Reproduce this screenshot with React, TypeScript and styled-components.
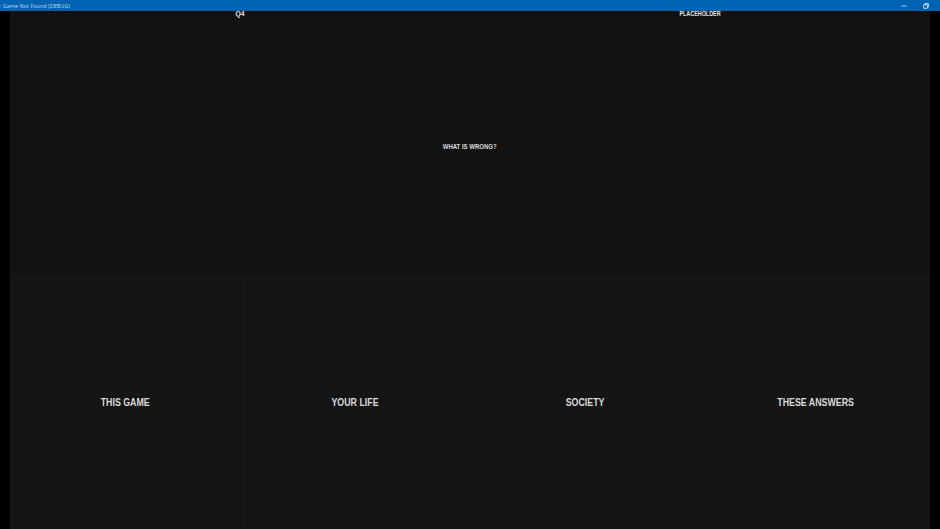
import styled, { createGlobalStyle } from "styled-components";

const GlobalStyle = createGlobalStyle`
  html, body, #root {
    margin: 0;
    height: 100%;
    background: #000;
  }
  * {
    box-sizing: border-box;
  }
`;

const answers = ["This Game", "Your Life", "Society", "These Answers"];

const App = () => {
  return (
    <Page>
      <GlobalStyle />
      <TitleBar>
        <WindowTitle>: Game Not Found (DEBUG)</WindowTitle>
        <WindowButtons>
          <WindowButton aria-label="minimize">
            <svg width="6" height="6" viewBox="0 0 6 6">
              <path d="M0.5 3H5.5" stroke="#a9c8e4" strokeWidth="1" fill="none" />
            </svg>
          </WindowButton>
          <WindowButton aria-label="restore">
            <svg width="6" height="6" viewBox="0 0 6 6">
              <path d="M0.7 1.7H4.3V5.3H0.7Z M1.9 1.7V0.6H5.4V4.2H4.3" stroke="#d5e4f2" strokeWidth="0.9" fill="none" />
            </svg>
          </WindowButton>
        </WindowButtons>
      </TitleBar>
      <Stage>
        <QuestionPanel>
          <QuestionHeader>
            <HeaderLabel squeeze={0.9}>Q4</HeaderLabel>
            <HeaderLabel squeeze={0.72}>Placeholder</HeaderLabel>
          </QuestionHeader>
          <QuestionBody>
            <QuestionText>What is wrong?</QuestionText>
          </QuestionBody>
        </QuestionPanel>
        <AnswerGrid>
          {answers.map((answer) => (
            <AnswerCell key={answer}>
              <AnswerText>{answer}</AnswerText>
            </AnswerCell>
          ))}
        </AnswerGrid>
      </Stage>
    </Page>
  );
};

export default App;

const Page = styled.div`
  width: 940px;
  height: 529px;
  display: flex;
  flex-direction: column;
  overflow: hidden;
  background: #000;
`;
const TitleBar = styled.div`
  height: 11px;
  flex-shrink: 0;
  display: flex;
  align-items: center;
  justify-content: space-between;
  background: #0063b1;
`;
const WindowTitle = styled.div`
  font-family: "Open Sans", "Liberation Sans", sans-serif;
  font-size: 5.5px;
  line-height: 10px;
  color: #c4d9ec;
  white-space: nowrap;
`;
const WindowButtons = styled.div`
  display: flex;
  align-items: center;
  padding-right: 3px;
`;
const WindowButton = styled.div`
  width: 22px;
  height: 11px;
  display: flex;
  align-items: center;
  justify-content: center;
`;
const Stage = styled.div`
  flex: 1;
  margin: 0 10px;
  display: flex;
  flex-direction: column;
  background: #131313;
`;
const QuestionPanel = styled.div`
  height: 264px;
  display: flex;
  flex-direction: column;
  background: #121212;
`;
const QuestionHeader = styled.div`
  height: 7px;
  display: grid;
  grid-template-columns: 1fr 1fr;
`;
const HeaderLabel = styled.div<{ squeeze: number }>`
  font-family: "Liberation Sans", sans-serif;
  font-weight: 700;
  font-size: 7.5px;
  line-height: 6px;
  text-align: center;
  text-transform: uppercase;
  color: #e4e4e4;
  transform: scaleX(${(props) => props.squeeze});
`;
const QuestionBody = styled.div`
  flex: 1;
  display: flex;
  align-items: center;
  justify-content: center;
`;
const QuestionText = styled.div`
  font-family: "Liberation Sans", sans-serif;
  font-weight: 700;
  font-size: 7.5px;
  text-transform: uppercase;
  color: #dcdcdc;
  transform: scaleX(0.8);
`;
const AnswerGrid = styled.div`
  flex: 1;
  display: grid;
  grid-template-columns: repeat(4, 1fr);
`;
const AnswerCell = styled.div`
  display: flex;
  align-items: center;
  justify-content: center;
  padding-bottom: 1px;
  background: #151515;
  border-left: 1px solid #131313;
`;
const AnswerText = styled.div`
  font-family: "Liberation Sans", sans-serif;
  font-weight: 700;
  font-size: 10.5px;
  text-transform: uppercase;
  color: #dadada;
  transform: scaleX(0.84);
`;
